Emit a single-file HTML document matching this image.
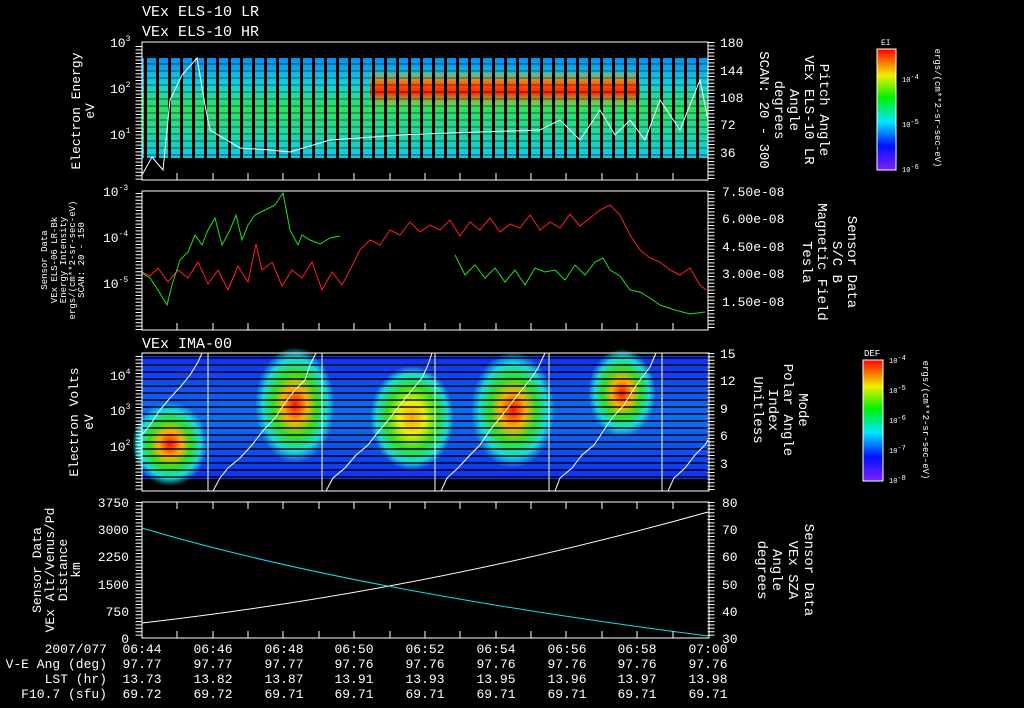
<!DOCTYPE html>
<html><head><meta charset="utf-8"><style>
html,body{margin:0;padding:0;background:#000;}
svg{display:block;}
text{font-family:"Liberation Mono",monospace;fill:#fff;}
</style></head><body>
<svg width="1024" height="708" viewBox="0 0 1024 708" xmlns="http://www.w3.org/2000/svg">
<defs>
<linearGradient id="p1" x1="0" y1="0" x2="0" y2="1">
<stop offset="0" stop-color="#0a8cf0"/><stop offset="0.25" stop-color="#10d0e0"/><stop offset="0.5" stop-color="#30e060"/><stop offset="0.75" stop-color="#20d8a0"/><stop offset="1" stop-color="#10c8e8"/></linearGradient>
<linearGradient id="band" x1="0" y1="0" x2="0" y2="1">
<stop offset="0" stop-color="#f0e000" stop-opacity="0"/><stop offset="0.35" stop-color="#ff6000"/><stop offset="0.6" stop-color="#ff2000"/><stop offset="1" stop-color="#f0e000" stop-opacity="0"/></linearGradient>
<linearGradient id="p3" x1="0" y1="0" x2="0" y2="1">
<stop offset="0" stop-color="#1030f0"/><stop offset="0.5" stop-color="#1070f0"/><stop offset="1" stop-color="#1030f0"/></linearGradient>
<radialGradient id="blob"><stop offset="0" stop-color="#ff1000"/><stop offset="0.3" stop-color="#ffb000"/><stop offset="0.55" stop-color="#30e020"/><stop offset="0.8" stop-color="#10e0e0"/><stop offset="1" stop-color="#10e0e0" stop-opacity="0"/></radialGradient>
<radialGradient id="blob2"><stop offset="0" stop-color="#ffa000"/><stop offset="0.3" stop-color="#f0f000"/><stop offset="0.6" stop-color="#30e020"/><stop offset="0.85" stop-color="#10e0e0"/><stop offset="1" stop-color="#10e0e0" stop-opacity="0"/></radialGradient>
<linearGradient id="cb" x1="0" y1="1" x2="0" y2="0">
<stop offset="0" stop-color="#8020ff"/><stop offset="0.2" stop-color="#0010ff"/><stop offset="0.4" stop-color="#00e8ff"/><stop offset="0.6" stop-color="#00f000"/><stop offset="0.78" stop-color="#f0f000"/><stop offset="1" stop-color="#ff0000"/></linearGradient>
<pattern id="stripes" width="12" height="10" patternUnits="userSpaceOnUse"><rect x="0" y="0" width="3" height="10" fill="#000"/></pattern>
<pattern id="hstripes" width="14" height="7" patternUnits="userSpaceOnUse"><rect x="0" y="0" width="14" height="2" fill="#000" opacity="0.7"/></pattern>
</defs>

<text x="142" y="16" font-size="15">VEx ELS-10 LR</text>
<text x="142" y="36" font-size="15">VEx ELS-10 HR</text>

<!-- Panel 1 -->
<rect x="142" y="58" width="566" height="100" fill="url(#p1)"/>
<rect x="370" y="70" width="270" height="38" fill="url(#band)"/>
<rect x="142" y="58" width="566" height="100" fill="url(#stripes)"/>
<rect x="142" y="58" width="566" height="100" fill="url(#hstripes)" opacity="0.4"/>
<polyline fill="none" stroke="#fff" stroke-width="1" points="142,175 152,157 163,170 170,100 182,75 197,58 205,105 210,130 240,148 270,150 290,152 330,140 360,138 400,135 450,133 540,130 560,120 580,140 600,110 615,135 630,120 645,140 660,100 680,130 700,80 708,120"/>
<rect x="142" y="42" width="566" height="138" fill="none" stroke="#fff"/>

<!-- Panel 2 -->
<polyline fill="none" stroke="#ff2020" points="142,272 150,276 158,268 168,282 178,270 188,278 198,262 208,284 218,270 228,290 238,266 248,282 256,244 262,270 272,262 282,286 292,270 302,278 312,262 322,290 332,272 342,285 350,270 360,250 370,240 380,245 390,230 400,235 410,222 420,232 430,225 440,230 450,220 460,236 470,222 480,230 490,218 500,232 510,224 520,228 530,215 540,230 550,222 560,228 570,214 580,226 590,218 600,210 610,205 620,215 630,235 640,250 650,258 660,262 670,270 680,275 690,268 700,285 706,290"/>
<polyline fill="none" stroke="#20e020" points="142,273 150,278 158,290 167,305 172,285 180,260 188,252 195,235 202,245 208,230 215,218 222,245 230,230 236,215 242,240 248,225 255,215 265,210 275,205 283,193 290,230 298,245 302,235 310,240 320,244 330,238 340,236"/>
<polyline fill="none" stroke="#20e020" points="455,255 465,275 475,265 485,278 495,268 505,282 515,270 525,285 535,268 545,272 555,270 565,280 575,265 585,275 595,262 603,258 610,270 620,276 630,290 640,292 650,298 660,305 675,310 690,314 705,312"/>
<rect x="142" y="191" width="566" height="139" fill="none" stroke="#fff"/>

<!-- Panel 3 -->
<text x="142" y="348" font-size="15">VEx IMA-00</text>
<rect x="142" y="356" width="566" height="123" fill="url(#p3)"/>
<ellipse cx="170" cy="444" rx="38" ry="42" fill="url(#blob)"/>
<ellipse cx="295" cy="405" rx="40" ry="58" fill="url(#blob)"/>
<ellipse cx="412" cy="418" rx="42" ry="52" fill="url(#blob2)"/>
<ellipse cx="513" cy="410" rx="42" ry="58" fill="url(#blob)"/>
<ellipse cx="622" cy="393" rx="34" ry="44" fill="url(#blob)"/>
<rect x="142" y="356" width="566" height="123" fill="url(#hstripes)"/>
<g stroke="#fff" fill="none">
<line x1="208" y1="353" x2="208" y2="491"/><line x1="322" y1="353" x2="322" y2="491"/><line x1="435" y1="353" x2="435" y2="491"/><line x1="549" y1="353" x2="549" y2="491"/><line x1="662" y1="353" x2="662" y2="491"/>
<polyline points="142,435 150,425 160,410 170,398 182,385 190,375 198,362 202,353"/>
<polyline points="213,491 220,478 228,468 240,458 252,445 262,432 275,418 285,403 295,390 305,380 310,365 316,353"/>
<polyline points="326,491 333,478 345,468 356,455 368,445 378,432 390,418 400,405 412,390 422,378 428,365 432,353"/>
<polyline points="441,491 447,478 458,468 470,455 480,445 490,430 500,418 510,405 520,392 530,380 538,368 545,353"/>
<polyline points="555,491 560,478 572,468 582,455 594,445 604,430 612,418 624,405 632,392 640,380 650,367 656,353"/>
<polyline points="668,491 674,478 685,468 695,455 705,445 708,440"/>
</g>
<rect x="142" y="353" width="567" height="138" fill="none" stroke="#fff"/>

<!-- Panel 4 -->
<path d="M142,623 Q430,590 708,512" fill="none" stroke="#fff"/>
<path d="M142,528 Q350,590 708,636" fill="none" stroke="#10e0e8"/>
<rect x="142" y="502" width="567" height="136" fill="none" stroke="#fff"/>

<g stroke="#fff">
<line x1="177" y1="180" x2="177" y2="173"/><line x1="213" y1="180" x2="213" y2="173"/><line x1="248" y1="180" x2="248" y2="173"/><line x1="283" y1="180" x2="283" y2="173"/><line x1="319" y1="180" x2="319" y2="173"/><line x1="354" y1="180" x2="354" y2="173"/><line x1="390" y1="180" x2="390" y2="173"/><line x1="425" y1="180" x2="425" y2="173"/><line x1="460" y1="180" x2="460" y2="173"/><line x1="496" y1="180" x2="496" y2="173"/><line x1="531" y1="180" x2="531" y2="173"/><line x1="566" y1="180" x2="566" y2="173"/><line x1="602" y1="180" x2="602" y2="173"/><line x1="637" y1="180" x2="637" y2="173"/><line x1="673" y1="180" x2="673" y2="173"/>
<line x1="177" y1="330" x2="177" y2="323"/><line x1="213" y1="330" x2="213" y2="323"/><line x1="248" y1="330" x2="248" y2="323"/><line x1="283" y1="330" x2="283" y2="323"/><line x1="319" y1="330" x2="319" y2="323"/><line x1="354" y1="330" x2="354" y2="323"/><line x1="390" y1="330" x2="390" y2="323"/><line x1="425" y1="330" x2="425" y2="323"/><line x1="460" y1="330" x2="460" y2="323"/><line x1="496" y1="330" x2="496" y2="323"/><line x1="531" y1="330" x2="531" y2="323"/><line x1="566" y1="330" x2="566" y2="323"/><line x1="602" y1="330" x2="602" y2="323"/><line x1="637" y1="330" x2="637" y2="323"/><line x1="673" y1="330" x2="673" y2="323"/>
<line x1="177" y1="638" x2="177" y2="631"/><line x1="213" y1="638" x2="213" y2="631"/><line x1="248" y1="638" x2="248" y2="631"/><line x1="283" y1="638" x2="283" y2="631"/><line x1="319" y1="638" x2="319" y2="631"/><line x1="354" y1="638" x2="354" y2="631"/><line x1="390" y1="638" x2="390" y2="631"/><line x1="425" y1="638" x2="425" y2="631"/><line x1="460" y1="638" x2="460" y2="631"/><line x1="496" y1="638" x2="496" y2="631"/><line x1="531" y1="638" x2="531" y2="631"/><line x1="566" y1="638" x2="566" y2="631"/><line x1="602" y1="638" x2="602" y2="631"/><line x1="637" y1="638" x2="637" y2="631"/><line x1="673" y1="638" x2="673" y2="631"/>
<line x1="177" y1="502" x2="177" y2="509"/><line x1="213" y1="502" x2="213" y2="509"/><line x1="248" y1="502" x2="248" y2="509"/><line x1="283" y1="502" x2="283" y2="509"/><line x1="319" y1="502" x2="319" y2="509"/><line x1="354" y1="502" x2="354" y2="509"/><line x1="390" y1="502" x2="390" y2="509"/><line x1="425" y1="502" x2="425" y2="509"/><line x1="460" y1="502" x2="460" y2="509"/><line x1="496" y1="502" x2="496" y2="509"/><line x1="531" y1="502" x2="531" y2="509"/><line x1="566" y1="502" x2="566" y2="509"/><line x1="602" y1="502" x2="602" y2="509"/><line x1="637" y1="502" x2="637" y2="509"/><line x1="673" y1="502" x2="673" y2="509"/>
</g>
<g stroke="#fff" stroke-dasharray="1 2.4">
<line x1="711" y1="42" x2="711" y2="180" stroke-width="7"/>
<line x1="711" y1="191" x2="711" y2="330" stroke-width="7"/>
<line x1="711" y1="353" x2="711" y2="491" stroke-width="7"/>
<line x1="711" y1="502" x2="711" y2="638" stroke-width="7"/>
<line x1="139" y1="46" x2="139" y2="180" stroke-width="7"/>
<line x1="139" y1="193" x2="139" y2="330" stroke-width="7"/>
<line x1="139" y1="356" x2="139" y2="491" stroke-width="7"/>
<line x1="139" y1="502" x2="139" y2="638" stroke-width="7"/>
</g>

<g font-size="13">
<text x="110" y="47">10<tspan font-size="8" dy="-6">3</tspan></text>
<text x="110" y="93">10<tspan font-size="8" dy="-6">2</tspan></text>
<text x="110" y="139">10<tspan font-size="8" dy="-6">1</tspan></text>
<text x="103" y="196">10<tspan font-size="8" dy="-6">-3</tspan></text>
<text x="103" y="242">10<tspan font-size="8" dy="-6">-4</tspan></text>
<text x="103" y="288">10<tspan font-size="8" dy="-6">-5</tspan></text>
<text x="110" y="380">10<tspan font-size="8" dy="-6">4</tspan></text>
<text x="110" y="415">10<tspan font-size="8" dy="-6">3</tspan></text>
<text x="110" y="451">10<tspan font-size="8" dy="-6">2</tspan></text>
<g text-anchor="end">
<text x="129" y="507">3750</text><text x="129" y="534">3000</text><text x="129" y="561">2250</text><text x="129" y="589">1500</text><text x="129" y="616">750</text><text x="129" y="643">0</text>
</g>
<text x="720" y="47">180</text><text x="720" y="75">144</text><text x="720" y="102">108</text><text x="720" y="129">72</text><text x="720" y="157">36</text>
<text x="722" y="196">7.50e-08</text><text x="722" y="223">6.00e-08</text><text x="722" y="251">4.50e-08</text><text x="722" y="278">3.00e-08</text><text x="722" y="306">1.50e-08</text>
<text x="720" y="358">15</text><text x="720" y="385">12</text><text x="720" y="413">9</text><text x="720" y="440">6</text><text x="720" y="468">3</text>
<text x="722" y="507">80</text><text x="722" y="534">70</text><text x="722" y="561">60</text><text x="722" y="589">50</text><text x="722" y="616">40</text><text x="722" y="643">30</text>
</g>

<g font-size="13" text-anchor="middle">
<text transform="translate(80,111) rotate(-90)">Electron Energy</text>
<text transform="translate(94,111) rotate(-90)">eV</text>
<text transform="translate(78,422) rotate(-90)">Electron Volts</text>
<text transform="translate(93,422) rotate(-90)">eV</text>
<text transform="translate(41,570) rotate(-90)">Sensor Data</text>
<text transform="translate(54,570) rotate(-90)">VEx Alt/Venus/Pd</text>
<text transform="translate(67,570) rotate(-90)">Distance</text>
<text transform="translate(80,570) rotate(-90)">km</text>
</g>
<g font-size="9" text-anchor="middle">
<text fill="#ff2020" transform="translate(47,260) rotate(-90)">Sensor Data</text>
<text fill="#ff2020" transform="translate(57,260) rotate(-90)">VEx ELS-06 LR-Bk</text>
<text fill="#ff2020" transform="translate(66,260) rotate(-90)">Energy Intensity</text>
<text fill="#ff2020" transform="translate(75,260) rotate(-90)">ergs/(cm**2-sr-sec-eV)</text>
<text fill="#ff2020" transform="translate(84,260) rotate(-90)">SCAN: 20 - 150</text>
</g>

<g font-size="14" text-anchor="middle">
<text transform="translate(820,110) rotate(90)">Pitch Angle</text>
<text transform="translate(805,110) rotate(90)">VEx ELS-10 LR</text>
<text transform="translate(790,110) rotate(90)">Angle</text>
<text transform="translate(775,110) rotate(90)">degrees</text>
<text transform="translate(760,110) rotate(90)">SCAN: 20 - 300</text>
<text fill="#20e020" transform="translate(848,262) rotate(90)">Sensor Data</text>
<text fill="#20e020" transform="translate(833,262) rotate(90)">S/C B</text>
<text fill="#20e020" transform="translate(818,262) rotate(90)">Magnetic Field</text>
<text fill="#20e020" transform="translate(803,262) rotate(90)">Tesla</text>
<text transform="translate(799,410) rotate(90)">Mode</text>
<text transform="translate(784,410) rotate(90)">Polar Angle</text>
<text transform="translate(769,410) rotate(90)">Index</text>
<text transform="translate(754,410) rotate(90)">Unitless</text>
<text fill="#10e0e8" transform="translate(805,570) rotate(90)">Sensor Data</text>
<text fill="#10e0e8" transform="translate(789,570) rotate(90)">VEx SZA</text>
<text fill="#10e0e8" transform="translate(773,570) rotate(90)">Angle</text>
<text fill="#10e0e8" transform="translate(758,570) rotate(90)">degrees</text>
</g>

<rect x="877" y="49" width="19" height="121" fill="url(#cb)" stroke="#fff"/>
<text x="881" y="45" font-size="8">EI</text>
<g font-size="7"><text x="902" y="82">10<tspan dy="-3">-4</tspan></text><text x="902" y="127">10<tspan dy="-3">-5</tspan></text><text x="902" y="172">10<tspan dy="-3">-6</tspan></text></g>
<text transform="translate(935,108) rotate(90)" font-size="9" text-anchor="middle">ergs/(cm**2-sr-sec-eV)</text>
<rect x="863" y="360" width="20" height="121" fill="url(#cb)" stroke="#fff"/>
<text x="864" y="356" font-size="9">DEF</text>
<g font-size="7"><text x="889" y="363">10<tspan dy="-3">-4</tspan></text><text x="889" y="393">10<tspan dy="-3">-5</tspan></text><text x="889" y="423">10<tspan dy="-3">-6</tspan></text><text x="889" y="453">10<tspan dy="-3">-7</tspan></text><text x="889" y="483">10<tspan dy="-3">-8</tspan></text></g>
<text transform="translate(923,420) rotate(90)" font-size="9" text-anchor="middle">ergs/(cm**2-sr-sec-eV)</text>

<g font-size="13">
<g text-anchor="end">
<text x="107" y="653">2007/077</text><text x="107" y="668">V-E Ang (deg)</text><text x="107" y="683">LST (hr)</text><text x="107" y="698">F10.7 (sfu)</text>
</g>
<g text-anchor="middle">
<text x="142" y="653">06:44</text><text x="213" y="653">06:46</text><text x="284" y="653">06:48</text><text x="354" y="653">06:50</text><text x="425" y="653">06:52</text><text x="496" y="653">06:54</text><text x="567" y="653">06:56</text><text x="637" y="653">06:58</text><text x="708" y="653">07:00</text>
<text x="142" y="668">97.77</text><text x="213" y="668">97.77</text><text x="284" y="668">97.77</text><text x="354" y="668">97.76</text><text x="425" y="668">97.76</text><text x="496" y="668">97.76</text><text x="567" y="668">97.76</text><text x="637" y="668">97.76</text><text x="708" y="668">97.76</text>
<text x="142" y="683">13.73</text><text x="213" y="683">13.82</text><text x="284" y="683">13.87</text><text x="354" y="683">13.91</text><text x="425" y="683">13.93</text><text x="496" y="683">13.95</text><text x="567" y="683">13.96</text><text x="637" y="683">13.97</text><text x="708" y="683">13.98</text>
<text x="142" y="698">69.72</text><text x="213" y="698">69.72</text><text x="284" y="698">69.71</text><text x="354" y="698">69.71</text><text x="425" y="698">69.71</text><text x="496" y="698">69.71</text><text x="567" y="698">69.71</text><text x="637" y="698">69.71</text><text x="708" y="698">69.71</text>
</g>
</g>
</svg>
</body></html>
